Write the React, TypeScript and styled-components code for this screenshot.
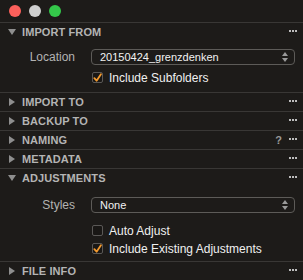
import React from "react";
import styled, { createGlobalStyle } from "styled-components";

const GlobalStyle = createGlobalStyle`
  html, body {
    margin: 0;
    padding: 0;
    background: #1d1b19;
  }
  body {
    font-family: "Liberation Sans", Arial, sans-serif;
    -webkit-font-smoothing: antialiased;
  }
`;

const Window = styled.div`
  width: 303px;
  height: 280px;
  overflow: hidden;
  background: #1d1b19;
  display: flex;
  flex-direction: column;
`;

const TitleBar = styled.div`
  height: 22px;
  flex-shrink: 0;
  display: flex;
  align-items: center;
  gap: 8px;
  padding: 0 0 0 9px;
  border-bottom: 1px solid #393735;
`;

const Light = styled.span<{ $color: string }>`
  width: 12px;
  height: 12px;
  border-radius: 50%;
  background: ${({ $color }) => $color};
  margin-top: -1px;
`;

const SectionHeader = styled.div<{ $open?: boolean }>`
  height: 18px;
  flex-shrink: 0;
  display: flex;
  align-items: center;
  padding: 0 6px 0 8px;
  border-bottom: ${({ $open }) => ($open ? "none" : "1px solid #393735")};
  color: #b4b4b4;
  font-size: 11px;
  font-weight: bold;
`;

const Arrow = styled.span`
  width: 8px;
  height: 8px;
  margin-right: 6px;
  display: flex;
  align-items: center;
  justify-content: center;
`;

const HeaderTitle = styled.span`
  flex: 1;
  letter-spacing: 0.1px;
`;

const Help = styled.span`
  color: #9a9a9a;
  font-size: 11px;
  font-weight: bold;
  margin-right: 7px;
`;

const Dots = styled.span`
  display: flex;
  gap: 1px;
  margin-top: -3px;
  span {
    width: 2px;
    height: 2px;
    background: #bdbdbd;
  }
`;

const Body = styled.div<{ $pad: string }>`
  flex-shrink: 0;
  padding: ${({ $pad }) => $pad};
  border-bottom: 1px solid #393735;
  display: flex;
  flex-direction: column;
`;

const FieldRow = styled.div`
  display: grid;
  grid-template-columns: 75px 1fr;
  column-gap: 16px;
  align-items: center;
  padding-right: 8px;
`;

const Label = styled.span`
  text-align: right;
  color: #b3b3b3;
  font-size: 12px;
`;

const Select = styled.div`
  height: 16px;
  box-sizing: border-box;
  border: 1px solid #5d5b58;
  border-radius: 4px;
  display: flex;
  align-items: center;
  justify-content: space-between;
  padding: 0 6px 0 8px;
  color: #f2f2f2;
  font-size: 11px;
`;

const CheckRow = styled.label<{ $top: number }>`
  display: flex;
  align-items: center;
  gap: 6px;
  margin-left: 92px;
  margin-top: ${({ $top }) => $top}px;
  height: 11px;
  color: #f0f0f0;
  font-size: 12px;
`;

const Box = styled.span`
  width: 11px;
  height: 11px;
  box-sizing: border-box;
  border: 1px solid #5a5856;
  border-radius: 2px;
  background: #191715;
  display: flex;
  align-items: center;
  justify-content: center;
`;

const Triangle = ({ open }: { open: boolean }) => (
  <svg width="8" height="8" viewBox="0 0 8 8">
    {open ? (
      <polygon points="0,1 8,1 4,7" fill="#8e8e8e" />
    ) : (
      <polygon points="1,0 7,4 1,8" fill="#8e8e8e" />
    )}
  </svg>
);

const Stepper = () => (
  <svg width="6" height="10" viewBox="0 0 6 10">
    <polygon points="3,0 6,4 0,4" fill="#9a9a9a" />
    <polygon points="0,6 6,6 3,10" fill="#9a9a9a" />
  </svg>
);

const Check = () => (
  <svg width="10" height="10" viewBox="0 0 10 10">
    <path d="M1.5 5.2 L4 8 L8.8 0.8" stroke="#f39a2e" strokeWidth="2" fill="none" strokeLinecap="round" strokeLinejoin="round" />
  </svg>
);

const Header = ({ title, open, help }: { title: string; open?: boolean; help?: boolean }) => (
  <SectionHeader $open={open}>
    <Arrow>
      <Triangle open={!!open} />
    </Arrow>
    <HeaderTitle>{title}</HeaderTitle>
    {help && <Help>?</Help>}
    <Dots>
      <span />
      <span />
      <span />
    </Dots>
  </SectionHeader>
);

const Checkbox = ({ label, checked, top }: { label: string; checked?: boolean; top: number }) => (
  <CheckRow $top={top}>
    <Box>{checked && <Check />}</Box>
    {label}
  </CheckRow>
);

export default function App() {
  return (
    <Window>
      <GlobalStyle />
      <TitleBar>
        <Light $color="#fc605b" />
        <Light $color="#cfcfcf" />
        <Light $color="#34c84a" />
      </TitleBar>

      <Header title="IMPORT FROM" open />
      <Body $pad="8px 0 9px 0">
        <FieldRow>
          <Label>Location</Label>
          <Select>
            <span>20150424_grenzdenken</span>
            <Stepper />
          </Select>
        </FieldRow>
        <Checkbox label="Include Subfolders" checked top={7} />
      </Body>

      <Header title="IMPORT TO" />
      <Header title="BACKUP TO" />
      <Header title="NAMING" help />
      <Header title="METADATA" />
      <Header title="ADJUSTMENTS" open />
      <Body $pad="10px 0 7px 0">
        <FieldRow>
          <Label>Styles</Label>
          <Select>
            <span>None</span>
            <Stepper />
          </Select>
        </FieldRow>
        <Checkbox label="Auto Adjust" top={12} />
        <Checkbox label="Include Existing Adjustments" checked top={7} />
      </Body>

      <Header title="FILE INFO" />
    </Window>
  );
}
